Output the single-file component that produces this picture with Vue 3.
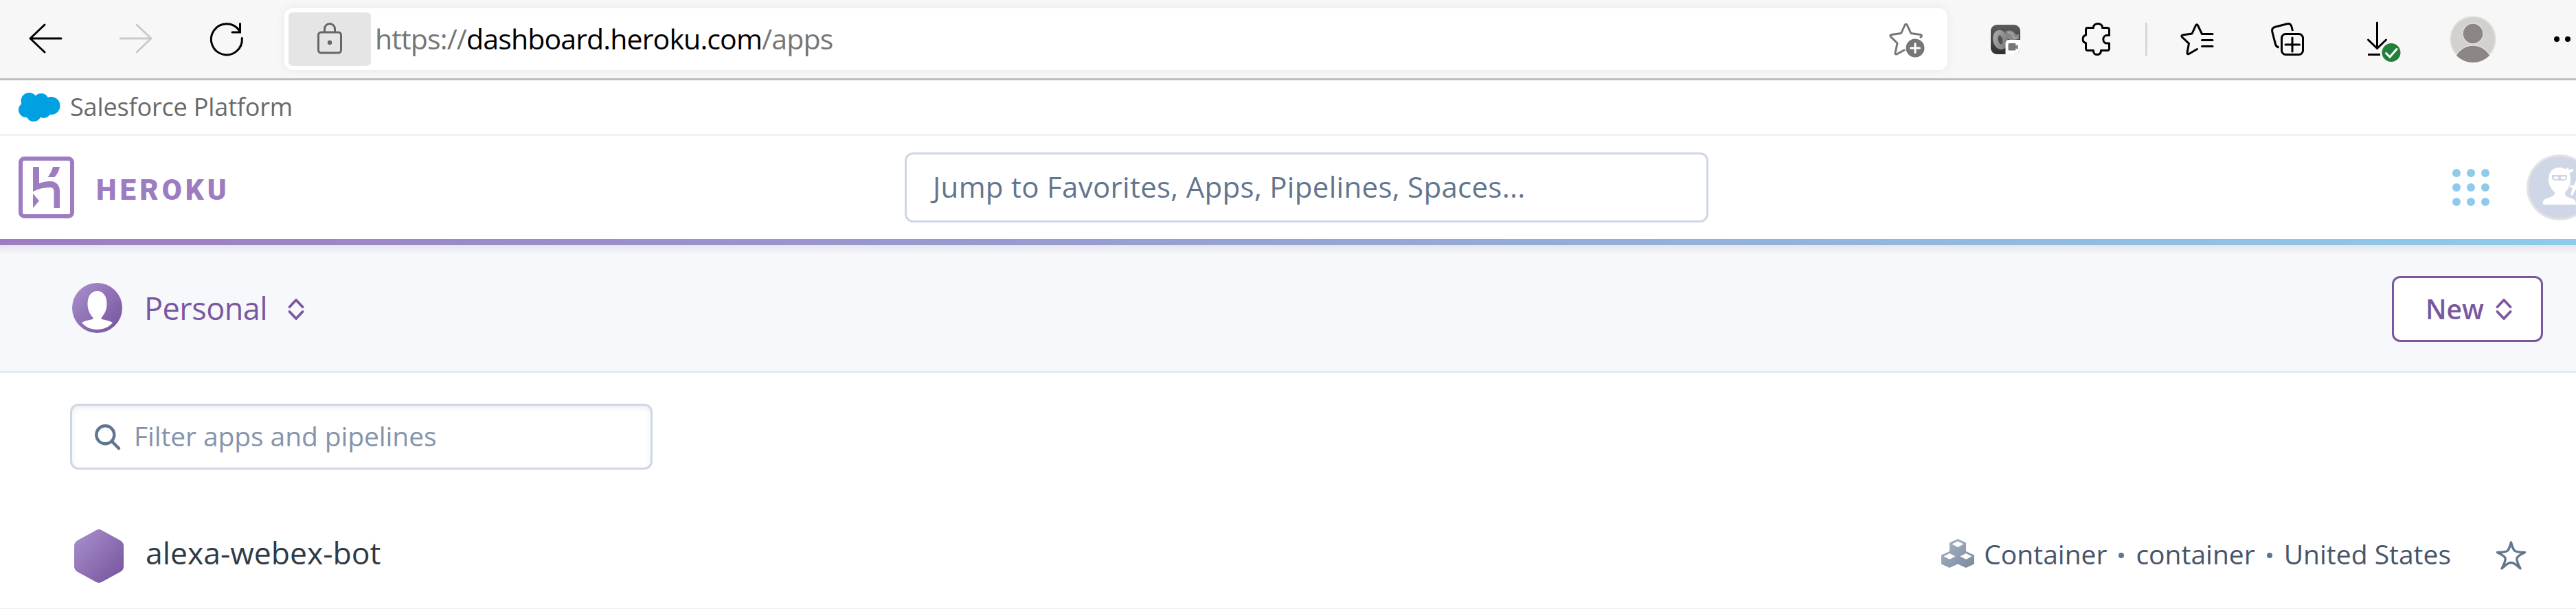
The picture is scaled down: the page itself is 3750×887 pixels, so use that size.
<script setup>
const dots = [0, 1, 2, 3, 4, 5, 6, 7, 8]
</script>

<template>
  <div class="page">
    <div class="toolbar">
      <svg class="ic back" width="48" height="44" viewBox="0 0 48 44" fill="none" stroke="#000" stroke-width="3" stroke-linecap="round" stroke-linejoin="round"><path d="M47 22H2M23 2L2 22l21 20" /></svg>
      <svg class="ic forward" width="48" height="44" viewBox="0 0 48 44" fill="none" stroke="#cacaca" stroke-width="3" stroke-linecap="round" stroke-linejoin="round"><path d="M1 22h45M25 2l21 20-21 20" /></svg>
      <svg class="ic reload" width="48" height="48" viewBox="0 0 48 48" fill="none" stroke="#000" stroke-width="3" stroke-linecap="round"><path d="M46.300 22.500A22.500 22.500 0 1 1 42 11M43.500 1.500v12.500H32" /></svg>
      <div class="address">
        <div class="lock">
          <svg width="36" height="46" viewBox="0 0 36 46" fill="none" stroke="#666" stroke-width="3"><rect x="1.500" y="14" width="33" height="30" rx="4" /><path d="M10.500 13V9a7.500 7.500 0 0 1 15 0v4" /><circle cx="18" cy="29" r="3.200" fill="#666" stroke="none" /></svg>
        </div>
        <div class="url">https://<b>dashboard.heroku.com</b>/apps</div>
        <svg class="fav" width="54" height="54" viewBox="0 0 54 54" fill="none" stroke="#767676" stroke-width="3" stroke-linecap="round" stroke-linejoin="round"><path d="M22 41l-10.500 5.800c-1.500.8-2.800-.2-2.500-1.800L12 31 2.500 21.500c-1.200-1.300-.7-2.800 1-3l14-2 5.500-12c.8-1.600 2.500-1.600 3.300 0l5.500 12 14 2c1.700.2 2.200 1.700 1 3l-.8.800" /><circle cx="38" cy="38" r="13.500" fill="#767676" stroke="none" /><path d="M38 31.500v13M31.500 38h13" stroke="#fff" /></svg>
      </div>
      <svg class="ic ext" width="43" height="43" viewBox="0 0 43 43">
        <defs>
          <linearGradient id="extBg" x1="0" y1="0" x2="0" y2="1"><stop offset="0" stop-color="#5c5c5c" /><stop offset="1" stop-color="#303030" /></linearGradient>
          <linearGradient id="extRing" x1="0" y1="0" x2="1" y2="1"><stop offset="0" stop-color="#a8a8a8" /><stop offset="1" stop-color="#7c7c7c" /></linearGradient>
        </defs>
        <rect width="43" height="43" rx="9" fill="url(#extBg)" />
        <path d="M21 10q8-4 13 1 2 4 7 3.500v6l-11 3-6-4z" fill="#888" />
        <path d="M25 11.500q6-1 7 4t7 4" fill="none" stroke="#a2a2a2" stroke-width="2.500" />
        <ellipse cx="14" cy="22" rx="7" ry="10.500" transform="rotate(-12 14 22)" fill="#505050" stroke="url(#extRing)" stroke-width="7.500" />
        <path d="M21.500 43V27a5 5 0 0 1 5-5H43v12a9 9 0 0 1-9 9z" fill="#fff" />
        <path d="M27 27h8q1.500 0 1.500 1.500v2.500l3-2.500v8l-3-2.500V36q0 1.500-1.500 1.500h-8q-1.500 0-1.500-1.500v-7.500q0-1.500 1.500-1.500z" fill="#777" />
      </svg>
      <svg class="ic puzzle" width="43" height="48" viewBox="0 0 43 48" fill="none" stroke="#000" stroke-width="3" stroke-linejoin="round"><path d="M9 7.500h8.500v-1a6.500 5 0 0 1 13 0v1H38a2.500 2.500 0 0 1 2.500 2.500v8.500H37a5.200 5.800 0 0 0 0 11.600h3.500V38a2.500 2.500 0 0 1-2.500 2.500h-9.500v1a5.500 5 0 0 1-11 0v-1H9A2.500 2.500 0 0 1 6.500 38v-8.500H6a5.200 5.800 0 0 1 0-11.200h.5V10A2.500 2.500 0 0 1 9 7.500z" /></svg>
      <div class="divider"></div>
      <svg class="ic favlist" width="48" height="48" viewBox="0 0 48 48" fill="none" stroke="#000" stroke-width="3" stroke-linecap="round" stroke-linejoin="round"><path d="M24.500 38.500l-12 7c-1.500.8-2.800 0-2.500-1.700l2.500-13.500-10-9.300c-1.200-1.300-.7-2.700 1-3l13.500-2L22.500 4c.8-1.600 2.200-1.600 3 0l6 12.500H47M31.500 25.500H47M31.500 34.500H47" /></svg>
      <svg class="ic collect" width="48" height="48" viewBox="0 0 48 48" fill="none" stroke="#000" stroke-width="3"><rect x="15.500" y="16.500" width="31" height="30" rx="6" /><path d="M31 22v20M21 32h20.500" stroke-linecap="round" /><path d="M31.500 12l-1.500-6c-.9-3.400-3-5-6.500-4.200L6 6.200C2.600 7.200 1 9.500 1.700 13L6.500 31.500c.8 2.700 2 4 5 4.500" /></svg>
      <svg class="ic down" width="49" height="58" viewBox="0 0 49 58" fill="none" stroke="#000" stroke-width="3"><path d="M14.500 0v37M1.500 25L14.500 37.500 27.500 25" stroke-linecap="round" /><path d="M1 46.500h18" /><circle cx="35" cy="43.500" r="13.500" fill="#22803a" stroke="none" /><path d="M27.500 44.500l5.500 5.500 10-11.500" stroke="#fff" stroke-linecap="round" /></svg>
      <svg class="ic profile" width="68" height="68" viewBox="0 0 68 68"><defs><clipPath id="pc"><circle cx="34" cy="34" r="34" /></clipPath></defs><g clip-path="url(#pc)"><circle cx="34" cy="34" r="34" fill="#e3e2e0" /><circle cx="34" cy="34" r="32" fill="#d2d1cd" /><circle cx="34" cy="71" r="28" fill="#8b8683" stroke="#e0dfdc" stroke-width="1.500" /><circle cx="34" cy="26" r="15" fill="#8b8683" stroke="#e0dfdc" stroke-width="1.500" /></g></svg>
      <svg class="ic more" width="42" height="8" viewBox="0 0 42 8"><circle cx="4" cy="4" r="4" /><circle cx="20" cy="4" r="4" /><circle cx="36" cy="4" r="4" /></svg>
    </div>

    <div class="platform">
      <svg width="60" height="42" viewBox="0 0 60 42" fill="#00a1e0"><circle cx="15.500" cy="12" r="12" /><circle cx="33" cy="12" r="11" /><circle cx="47.500" cy="19" r="13" /><circle cx="11" cy="25" r="11" /><circle cx="22" cy="31" r="11" /><circle cx="36.500" cy="26.500" r="10.500" /><circle cx="27" cy="20" r="13" /></svg>
      <span>Salesforce Platform</span>
    </div>

    <header class="header">
      <div class="brand">
        <svg width="81" height="90" viewBox="0 0 81 90" fill="#9e7cc1"><rect x="3" y="3" width="75" height="84" rx="5.500" fill="none" stroke="#9e7cc1" stroke-width="6" /><path d="M21 15h9v24c5-2 11-3 16-3 9 0 14 6 14 14v25h-8.500V51c0-4-2-6-6-6-9 0-17 2-24.500 6z" /><path d="M21 54l9 10.500L21 75zM50 15h10c-1 5.500-3.500 10.500-7.500 15H42.500c3.800-5 6.200-9.500 7.500-15z" /></svg>
        <span>HEROKU</span>
      </div>
      <div class="search">Jump to Favorites, Apps, Pipelines, Spaces...</div>
      <div class="account">
        <div class="dots"><i v-for="d in dots" :key="d"></i></div>
        <svg class="ninja" width="96" height="96" viewBox="0 0 96 96"><circle cx="48" cy="48" r="46.500" fill="#cfd7e6" stroke="#e3e3e3" stroke-width="3" /><g fill="#fff"><path d="M48 19c10 0 16 7 16 17 0 8-3 14-7 18-2 4-1 6 3 8l8 3c3 1.500 4 4 4 8H26q-3 0-2-3c0-3 2-5 4-5.500l9-3.500c4-2 5-4 3-7-4-4-8-10-8-18 0-10 6-17 16-17z" /><path d="M56 22l4-3 1 3 7-1v3l-7 4zM64 58l3-9-4-2 1-3 4 2 5-10 4 2-5 10 5 2-1 3-5-2-4 9z" /></g><path d="M37 30h22v5q-1 3-6 3H43q-5 0-6-3z" fill="#cfd7e6" /><ellipse cx="43" cy="34" rx="3.500" ry="2" fill="#fff" /><ellipse cx="53.500" cy="34" rx="3.500" ry="2" fill="#fff" /></svg>
      </div>
    </header>
    <div class="rainbow"></div>

    <section class="context">
      <svg class="person" width="73" height="73" viewBox="0 0 73 73">
        <defs><linearGradient id="purple" x1="0" y1="0" x2="1" y2="1"><stop offset="0.100" stop-color="#a58bca" /><stop offset="0.900" stop-color="#79589f" /></linearGradient></defs>
        <circle cx="36.500" cy="36.500" r="36.500" fill="url(#purple)" />
        <path d="M36.500 12c9 0 14 7.500 14 18.500 0 9-3.200 14.500-7.200 19.500-1.800 2.200-1 2.800 2 3.400 5 .9 9.500 1.600 13.700 4.600C53.500 64.500 45.500 68 36.500 68S19.500 64.500 14 58c4.200-3 8.700-3.700 13.700-4.600 3-.6 3.800-1.200 2-3.400-4-5-7.200-10.500-7.200-19.500 0-11 5-18.500 14-18.500z" fill="#fff" />
      </svg>
      <span class="who">Personal</span>
      <svg class="chev" width="22" height="31" viewBox="0 0 22 31"><path d="M1.500 12L11 2l9.500 10M1.500 19L11 29l9.500-10" /></svg>
      <button class="new">New<svg class="chev" width="22" height="31" viewBox="0 0 22 31"><path d="M1.500 12L11 2l9.500 10M1.500 19L11 29l9.500-10" /></svg></button>
    </section>

    <main class="main">
      <div class="filter">
        <svg width="37" height="37" viewBox="0 0 37 37" fill="none" stroke="#62758f" stroke-width="4.500"><circle cx="15.300" cy="15.300" r="13" /><path d="M24.500 24.500L35 35" stroke-linecap="round" /></svg>
        <span>Filter apps and pipelines</span>
      </div>
      <div class="app">
        <svg class="hex" width="72" height="78" viewBox="0 0 72 78"><path d="M32 1.200q4-2.200 8 0l27 14.800q5 3 5 8v30q0 5-5 8L40 76.800q-4 2.200-8 0L5 62q-5-3-5-8V24q0-5 5-8z" fill="url(#purple)" /></svg>
        <span class="name">alexa-webex-bot</span>
        <div class="meta">
          <svg class="cubes" width="48" height="42" viewBox="0 0 48 42"><defs><linearGradient id="slate" x1="0" y1="0" x2="1" y2="1"><stop offset="0.100" stop-color="#a5b1c3" /><stop offset="1" stop-color="#7a899f" /></linearGradient></defs><path fill="url(#slate)" fill-rule="evenodd" d="M24 0l12 5.500v12.500l12 5.500v13L36 42l-12-5.500L12 42 0 36.500v-13L12 18V5.500zM24 3.200L15.500 7.500 24 12l8.500-4.500zM12 21l-8.500 4.200 8.500 4.600 8.500-4.600zM36 21l-8.500 4.200 8.500 4.600 8.500-4.600z" /></svg>
          <span>Container</span><i></i><span>container</span><i></i><span>United States</span>
        </div>
        <svg class="star" width="45" height="43" viewBox="0 0 45 43" fill="none" stroke="#62758f" stroke-width="3.400" stroke-linejoin="round"><path d="M22.500 3c1.500 6 2.500 9 5 12 2.500 2 8 2.500 15 2.500-5 3-10 5-11.500 8-1 4 1.500 9 5 15.500-5-4-8-8.500-13.500-8.500S14 37 9 41c3.500-6.500 6-11.500 5-15.500C12.500 22.500 7.500 20.500 2.500 17.500c7 0 12.500-.5 15-2.500 2.500-3 3.500-6 5-12z" /></svg>
      </div>
    </main>
  </div>
</template>

<style>
html,
body {
  margin: 0;
  overflow: hidden;
  background: #fff;
}
</style>

<style scoped>
.page {
  width: 3750px;
  height: 887px;
  overflow: hidden;
  background: #fff;
  font-family: "Open Sans", "Noto Sans", sans-serif;
  white-space: nowrap;
}
.page * { box-sizing: border-box; }
svg { display: block; flex: none; overflow: visible; }

.toolbar {
  display: flex;
  align-items: center;
  height: 117px;
  border-bottom: 3px solid #bdbdbd;
  background: #f7f7f7;
  overflow: hidden;
}
.back { margin-left: 42px; margin-bottom: 3px; }
.forward { margin-left: 84px; margin-bottom: 3px; }
.reload { margin-left: 84px; }
.address {
  flex: none;
  display: flex;
  align-items: center;
  width: 2421px;
  height: 90px;
  margin-left: 60px;
  padding: 6px;
  border-radius: 12px;
  background: #fff;
  box-shadow: 0 0 14px rgba(0, 0, 0, 0.07);
}
.lock {
  display: flex;
  align-items: center;
  justify-content: center;
  width: 120px;
  height: 78px;
  padding-bottom: 3px;
  border-radius: 6px;
  background: #e5e5e5;
}
.url {
  margin-left: 6px;
  padding-bottom: 2px;
  color: #767676;
  font-size: 41px;
  letter-spacing: -0.85px;
}
.url b { color: #000; font-weight: 400; }
.fav { margin-left: auto; margin-right: 25px; margin-top: 4px; }
.ext { margin-left: 63px; }
.puzzle { margin-left: 89px; }
.divider { flex: none; width: 3px; height: 48px; margin-left: 50px; background: #d6d6d6; }
.favlist { margin-left: 48px; }
.collect { margin-left: 84px; }
.down { margin-left: 92px; margin-top: 10px; }
.profile { margin-left: 71px; }
.more { margin-left: 84px; }

.platform {
  display: flex;
  align-items: center;
  height: 81px;
  padding-left: 27px;
  border-bottom: 3px solid #edf2f6;
}
.platform span { margin-left: 15px; padding-bottom: 2px; color: #696969; font-size: 36px; letter-spacing: -0.15px; }

.header {
  display: grid;
  grid-template-columns: 1317px 1170px 1fr;
  align-items: center;
  height: 150px;
}
.brand { display: flex; align-items: center; padding-left: 27px; }
.brand span {
  margin-left: 32px;
  padding-top: 7px;
  color: #9e7cc1;
  font: 900 42px Roboto, sans-serif;
  letter-spacing: 5.1px;
}
.search {
  height: 102px;
  padding-left: 38px;
  border: 3px solid #cfd7e6;
  border-radius: 12px;
  background: #fff;
  color: #62758f;
  font-size: 42px;
  line-height: 93px;
  letter-spacing: 0.3px;
}
.account { display: flex; align-items: center; padding-left: 1083px; }
.dots { flex: none; display: grid; grid-template-columns: repeat(3, 12px); gap: 9px; }
.dots i { width: 12px; height: 12px; border-radius: 50%; background: #8ecbea; }
.ninja { margin-left: 54px; }

.rainbow { height: 9px; background: linear-gradient(90deg, #9e7cc1, #8ecbea); }

.context {
  display: flex;
  align-items: center;
  height: 186px;
  padding: 0 48px 0 105px;
  border-bottom: 3px solid #e3ebf4;
  background: linear-gradient(#e4e6e9, #f7f8fc 14px);
}
.who {
  margin-left: 32px;
  color: #79589f;
  font-size: 45px;
  letter-spacing: -0.5px;
}
.chev { fill: none; stroke: #79589f; stroke-width: 3.8; stroke-linecap: round; stroke-linejoin: round; }
.who + .chev { margin-left: 31px; margin-top: 3px; }
.new {
  display: flex;
  align-items: center;
  width: 220px;
  height: 96px;
  margin: 3px 0 0 auto;
  padding: 0 0 0 46px;
  border: 3px solid #79589f;
  border-radius: 12px;
  background: #fff;
  color: #79589f;
  font: 600 39px/88px "Open Sans", sans-serif;
}
.new .chev { margin-left: auto; margin-right: 43px; }

.main { padding: 45px 0 0 102px; }
.filter {
  display: flex;
  align-items: center;
  width: 848px;
  height: 96px;
  padding-left: 33px;
  border: 3px solid #cfd7e6;
  border-radius: 12px;
  box-shadow: inset 0 3px 7px rgba(90, 110, 150, 0.13);
}
.filter span { margin-left: 20px; padding-bottom: 3px; color: #8494ab; font-size: 39px; letter-spacing: -0.1px; }

.app {
  display: flex;
  align-items: center;
  height: 157px;
  margin: 46px 0 0 -102px;
  padding-left: 108px;
  border-bottom: 1px solid #edeef5;
}
.hex { margin-top: 4px; }
.name { margin-left: 32px; margin-top: -8px; color: #2f3a47; font-size: 44.5px; }
.meta { display: flex; align-items: center; margin-left: auto; color: #475569; font-size: 39px; margin-top: -4px; }
.cubes { margin-right: 14px; }
.meta i { width: 8px; height: 8px; margin: 6px 17px 0; border-radius: 50%; background: #62758f; }
.star { margin: 0 72px 0 65px; }
</style>
